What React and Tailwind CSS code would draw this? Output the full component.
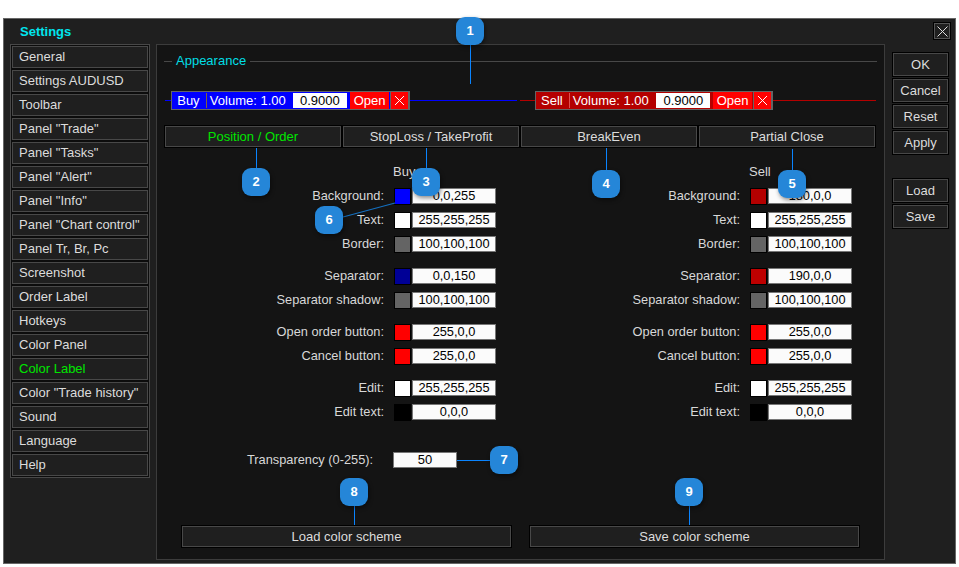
import React from "react";

const menuItems = [
  "General",
  "Settings AUDUSD",
  "Toolbar",
  'Panel "Trade"',
  'Panel "Tasks"',
  'Panel "Alert"',
  'Panel "Info"',
  'Panel "Chart control"',
  "Panel Tr, Br, Pc",
  "Screenshot",
  "Order Label",
  "Hotkeys",
  "Color Panel",
  "Color Label",
  'Color "Trade history"',
  "Sound",
  "Language",
  "Help",
];

const tabs = ["Position / Order", "StopLoss / TakeProfit", "BreakEven", "Partial Close"];

const buyGroups = [
  [
    ["Background:", "#0000ff", "0,0,255"],
    ["Text:", "#ffffff", "255,255,255"],
    ["Border:", "#646464", "100,100,100"],
  ],
  [
    ["Separator:", "#000096", "0,0,150"],
    ["Separator shadow:", "#646464", "100,100,100"],
  ],
  [
    ["Open order button:", "#ff0000", "255,0,0"],
    ["Cancel button:", "#ff0000", "255,0,0"],
  ],
  [
    ["Edit:", "#ffffff", "255,255,255"],
    ["Edit text:", "#000000", "0,0,0"],
  ],
];

const sellGroups = [
  [
    ["Background:", "#b40000", "180,0,0"],
    ["Text:", "#ffffff", "255,255,255"],
    ["Border:", "#646464", "100,100,100"],
  ],
  [
    ["Separator:", "#be0000", "190,0,0"],
    ["Separator shadow:", "#646464", "100,100,100"],
  ],
  [
    ["Open order button:", "#ff0000", "255,0,0"],
    ["Cancel button:", "#ff0000", "255,0,0"],
  ],
  [
    ["Edit:", "#ffffff", "255,255,255"],
    ["Edit text:", "#000000", "0,0,0"],
  ],
];

// numbered blue markers, [number, x, y] of the top left corner
const badges = [
  [1, 456, 17],
  [2, 242, 168],
  [3, 412, 168],
  [4, 592, 170],
  [5, 778, 170],
  [6, 315, 206],
  [7, 490, 446],
  [8, 340, 478],
  [9, 675, 478],
];

// connector lines of the markers
const leaders = [
  "left-[470px] top-[44px] w-[1px] h-[40px]",
  "left-[256px] top-[148px] w-[1px] h-[21px]",
  "left-[426px] top-[148px] w-[1px] h-[21px]",
  "left-[606px] top-[148px] w-[1px] h-[23px]",
  "left-[792px] top-[149px] w-[1px] h-[22px]",
  "left-[457px] top-[460px] w-[34px] h-[1px]",
  "left-[354px] top-[505px] w-[1px] h-[20px]",
  "left-[689px] top-[505px] w-[1px] h-[20px]",
];

function Btn({ className = "", children }) {
  return (
    <div
      className={
        "flex items-center justify-center shrink-0 border border-[#484848] bg-[#1f1f1f] outline outline-1 outline-black text-[#dcdcdc] " +
        className
      }
    >
      {children}
    </div>
  );
}

function ColorRow({ label, color, value }) {
  return (
    <div className="flex items-center h-[24px]">
      <div className="w-[220px] pr-[10px] text-right text-[#d8d8d8] text-[12.8px]">{label}</div>
      <div className="w-[17px] h-[17px] border border-black" style={{ backgroundColor: color }} />
      <div className="ml-[1px] w-[84px] h-[16px] flex items-center justify-center bg-[#fbfbfb] border border-[#777] text-black text-[12.8px] leading-none">
        {value}
      </div>
    </div>
  );
}

function ColorColumn({ title, groups }) {
  return (
    <div className="w-[322px]">
      <div className="h-[24px] flex items-center text-[#d8d8d8] pl-[219px]">{title}</div>
      <div className="flex flex-col gap-[8px]">
        {groups.map((group, i) => (
          <div key={i}>
            {group.map(([label, color, value]) => (
              <ColorRow key={label} label={label} color={color} value={value} />
            ))}
          </div>
        ))}
      </div>
    </div>
  );
}

function OrderBar({ kind }) {
  const buy = kind === "buy";
  return (
    <div
      className={
        "flex items-center shrink-0 h-[19px] text-white border border-[#646464] " +
        (buy ? "w-[239px] bg-[#0000ff]" : "w-[238px] bg-[#b40000]")
      }
    >
      <span className={"text-center pr-[1px] " + (buy ? "w-[34px]" : "w-[33px]")}>{buy ? "Buy" : "Sell"}</span>
      <span className={"h-[15px] w-[1px] " + (buy ? "bg-[#806040]" : "bg-[#e05050]")} />
      <span className={"pl-[3px] whitespace-nowrap " + (buy ? "w-[85px]" : "w-[86px]")}>Volume: 1.00</span>
      <span
        className={
          "h-[17px] flex items-center justify-center bg-white text-black border " +
          (buy ? "w-[57px] border-[#0000ff]" : "w-[56px] border-[#b40000]")
        }
      >
        0.9000
      </span>
      <span className="ml-[2px] w-[39px] h-[17px] flex items-center justify-center bg-[#ff0000]">Open</span>
      <span className="ml-[1px] w-[19px] h-[19px] flex items-center justify-center bg-[#ff0000] border border-[#646464]">
        <svg width="11" height="11" viewBox="0 0 11 11" stroke="#ffffff" strokeWidth="1" fill="none">
          <path d="M1 1 L10 10 M10 1 L1 10" />
        </svg>
      </span>
    </div>
  );
}

export default function App() {
  return (
    <div className="relative w-[959px] h-[567px] bg-white overflow-hidden font-['Liberation_Sans',Arial,sans-serif] text-[13px]">
      <div className="ml-[3px] mt-[18px] w-[953px] h-[546px] inline-flex flex-col align-top bg-[#1f1f1f] border border-[#666] pl-[6px] pr-[7px]">
        {/* title bar */}
        <div className="h-[25px] flex items-center justify-between">
          <span className="pl-[10px] font-bold text-[#00e6ee]">Settings</span>
          <div className="mr-[-2px] mb-[1px] w-[16px] h-[16px] flex items-center justify-center border border-[#555] outline outline-1 outline-black">
            <svg width="11" height="11" viewBox="0 0 11 11" stroke="#dddddd" strokeWidth="1" fill="none">
              <path d="M0.5 0.5 L10.5 10.5 M10.5 0.5 L0.5 10.5" />
            </svg>
          </div>
        </div>

        <div className="flex items-start">
          {/* left menu */}
          <div className="shrink-0 w-[140px] h-[434px] border border-[#484848] bg-[#0c0c0c] p-[1px] flex flex-col gap-[2px]">
            {menuItems.map((item) => (
              <Btn
                key={item}
                className={
                  "h-[22px] !justify-start pl-[6px] !outline-0 " +
                  (item === "Color Label" ? "!text-[#00e600]" : "")
                }
              >
                {item}
              </Btn>
            ))}
          </div>

          {/* main panel */}
          <div className="shrink-0 ml-[6px] w-[729px] h-[516px] bg-[#141414] border border-[#3c3c3c]">
            <div className="h-[32px] flex items-center px-[7px]">
              <span className="w-[8px] h-[1px] bg-[#484848]" />
              <span className="px-[4px] text-[#00dfe6]">Appearance</span>
              <span className="flex-1 h-[1px] bg-[#484848]" />
            </div>

            {/* order label preview */}
            <div className="mt-[14px] h-[19px] flex items-center pl-[8px]">
              <span className="w-[6px] h-[1px] bg-[#0000ff]" />
              <OrderBar kind="buy" />
              <span className="w-[107px] h-[1px] bg-[#0000ff]" />
              <span className="ml-[3px] w-[15px] h-[1px] bg-[#b40000]" />
              <OrderBar kind="sell" />
              <span className="w-[103px] h-[1px] bg-[#b40000]" />
            </div>

            {/* tabs */}
            <div className="mt-[16px] pl-[8px] flex gap-[2px]">
              {tabs.map((tab, i) => (
                <Btn key={tab} className={"w-[176px] h-[21px] " + (i === 0 ? "!text-[#00e600]" : "")}>
                  {tab}
                </Btn>
              ))}
            </div>

            {/* color settings */}
            <div className="mt-[13px] pl-[17px] flex gap-[34px]">
              <ColorColumn title="Buy" groups={buyGroups} />
              <ColorColumn title="Sell" groups={sellGroups} />
            </div>

            <div className="mt-[28px] pl-[90px] flex items-center h-[16px]">
              <span className="w-[146px] text-[#d8d8d8] text-[12.8px] whitespace-nowrap">Transparency (0-255):</span>
              <div className="w-[64px] h-[16px] flex items-center justify-center bg-[#fbfbfb] border border-[#777] text-black">
                50
              </div>
            </div>

            <div className="mt-[58px] pl-[25px] flex gap-[19px]">
              <Btn className="w-[329px] h-[21px]">Load color scheme</Btn>
              <Btn className="w-[329px] h-[21px]">Save color scheme</Btn>
            </div>
          </div>

          {/* right buttons */}
          <div className="shrink-0 ml-[8px] w-[55px] mt-[9px] flex flex-col">
            <div className="flex flex-col gap-[3px]">
              {["OK", "Cancel", "Reset", "Apply"].map((b) => (
                <Btn key={b} className="h-[23px]">{b}</Btn>
              ))}
            </div>
            <div className="mt-[25px] flex flex-col gap-[3px]">
              {["Load", "Save"].map((b) => (
                <Btn key={b} className="h-[23px]">{b}</Btn>
              ))}
            </div>
          </div>
        </div>
      </div>

      {/* annotation overlay */}
      {leaders.map((pos) => (
        <div key={pos} className={"absolute bg-[#0a84ff] " + pos} />
      ))}
      <svg className="absolute left-[340px] top-[200px]" width="60" height="24" viewBox="0 0 60 24">
        <path d="M3 17 L55 3" stroke="#1470c0" strokeWidth="1.2" fill="none" />
      </svg>
      {badges.map(([n, x, y]) => (
        <div
          key={n}
          className="absolute w-[28px] h-[28px] rounded-[9px] bg-[#2586d8] flex items-center justify-center text-white font-bold text-[13px] shadow-[1px_2px_4px_rgba(0,0,0,0.45)]"
          style={{ left: x, top: y }}
        >
          {n}
        </div>
      ))}
    </div>
  );
}
